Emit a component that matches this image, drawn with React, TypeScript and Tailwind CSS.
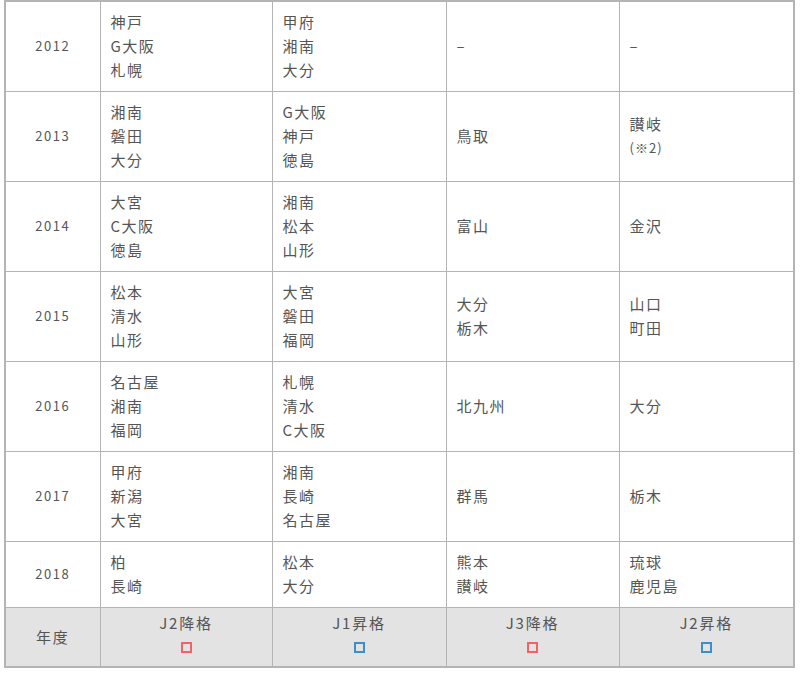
import React from 'react'

type Row = {
  year: string
  j2down: string[]
  j1up: string[]
  j3down: string[]
  j2up: string[]
}

const rows: Row[] = [
  { year: '2012', j2down: ['神戸', 'G大阪', '札幌'], j1up: ['甲府', '湘南', '大分'], j3down: ['–'], j2up: ['–'] },
  { year: '2013', j2down: ['湘南', '磐田', '大分'], j1up: ['G大阪', '神戸', '徳島'], j3down: ['鳥取'], j2up: ['讃岐', '(※2)'] },
  { year: '2014', j2down: ['大宮', 'C大阪', '徳島'], j1up: ['湘南', '松本', '山形'], j3down: ['富山'], j2up: ['金沢'] },
  { year: '2015', j2down: ['松本', '清水', '山形'], j1up: ['大宮', '磐田', '福岡'], j3down: ['大分', '栃木'], j2up: ['山口', '町田'] },
  { year: '2016', j2down: ['名古屋', '湘南', '福岡'], j1up: ['札幌', '清水', 'C大阪'], j3down: ['北九州'], j2up: ['大分'] },
  { year: '2017', j2down: ['甲府', '新潟', '大宮'], j1up: ['湘南', '長崎', '名古屋'], j3down: ['群馬'], j2up: ['栃木'] },
  { year: '2018', j2down: ['柏', '長崎'], j1up: ['松本', '大分'], j3down: ['熊本', '讃岐'], j2up: ['琉球', '鹿児島'] },
]

function Lines({ items }: { items: string[] }) {
  return (
    <>
      {items.map((t, i) => (
        <div key={i} className={t.startsWith('(') ? 'text-[13px] tracking-[0.08em]' : ''}>
          {t}
        </div>
      ))}
    </>
  )
}

function Head({ label, color }: { label: string; color: 'red' | 'blue' }) {
  return (
    <th className="border border-[#b4b4b4] px-2 pt-[3px] pb-[13px] align-top font-normal">
      <div className="flex flex-col items-center">
        <span className="leading-6">{label}</span>
        <span
          className={
            color === 'red'
              ? 'mt-[7px] block h-[11px] w-[11px] border-2 border-[#f06468]'
              : 'mt-[7px] block h-[11px] w-[11px] border-2 border-[#3d8fcc]'
          }
        />
      </div>
    </th>
  )
}

export default function App() {
  return (
    <div
      className="min-h-[673px] bg-white pl-[4px] text-[15px] leading-6 tracking-[0.1em] text-[#555]"
      style={{ fontFamily: '"Noto Sans CJK JP", "Noto Sans", sans-serif' }}
    >
      <table className="w-[789px] table-fixed border-collapse border-2 border-[#b4b4b4]">
        <colgroup>
          <col className="w-[95px]" />
          <col className="w-[172px]" />
          <col className="w-[174px]" />
          <col className="w-[173px]" />
          <col className="w-[175px]" />
        </colgroup>
        <tbody>
          {rows.map((r) => (
            <tr key={r.year}>
              <td className="border border-[#b4b4b4] pt-2 pb-[9px] text-center align-middle text-[13px] tracking-[0.12em]">{r.year}</td>
              <td className="border border-[#b4b4b4] pt-2 pb-[9px] pl-[10px] align-middle">
                <Lines items={r.j2down} />
              </td>
              <td className="border border-[#b4b4b4] pt-2 pb-[9px] pl-[10px] align-middle">
                <Lines items={r.j1up} />
              </td>
              <td className="border border-[#b4b4b4] pt-2 pb-[9px] pl-[10px] align-middle">
                <Lines items={r.j3down} />
              </td>
              <td className="border border-[#b4b4b4] pt-2 pb-[9px] pl-[10px] align-middle">
                <Lines items={r.j2up} />
              </td>
            </tr>
          ))}
          <tr className="bg-[#e3e3e3] text-[15px] tracking-[0.12em]">
            <th className="border border-[#b4b4b4] text-center align-middle font-normal">年度</th>
            <Head label="J2降格" color="red" />
            <Head label="J1昇格" color="blue" />
            <Head label="J3降格" color="red" />
            <Head label="J2昇格" color="blue" />
          </tr>
        </tbody>
      </table>
    </div>
  )
}
